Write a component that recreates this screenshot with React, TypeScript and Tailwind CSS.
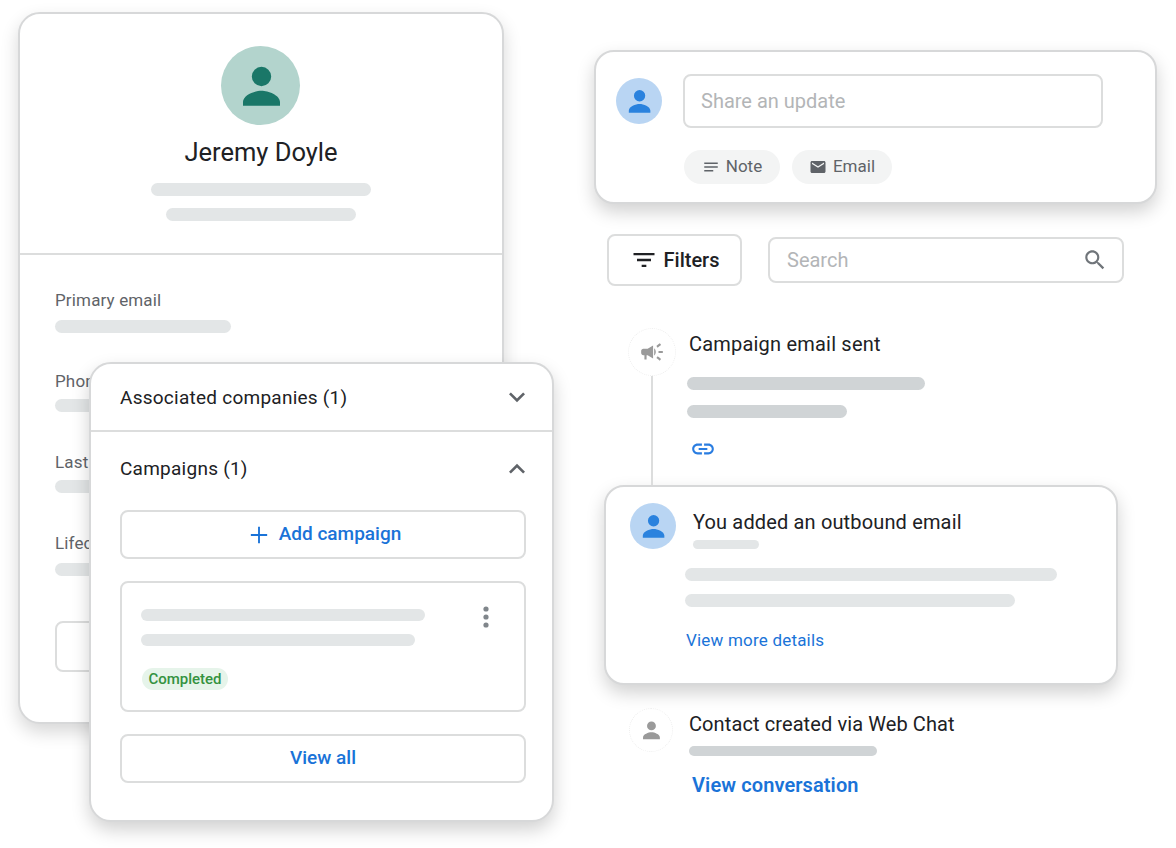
const PERSON = "M22 59.7V56c0-7 12-11.3 18.5-11.3S59 49 59 56v3.7zM40.5 40.2a9.7 9.7 0 1 0 0-19.4 9.7 9.7 0 0 0 0 19.4z";

function Avatar({ outer, fill, bg }: { outer: string; fill: string; bg: string }) {
  return (
    <div className={`${outer} ${bg} rounded-full shrink-0`}>
      <svg viewBox="0 0 79 79" className={`w-full h-full ${fill}`}>
        <path d={PERSON} />
      </svg>
    </div>
  );
}

function Icon({ d, className }: { d: string; className: string }) {
  return (
    <svg viewBox="0 0 24 24" className={`fill-current shrink-0 ${className}`}>
      <path d={d} />
    </svg>
  );
}

function Field({ label, barClass, top }: { label: string; barClass: string; top: string }) {
  return (
    <div className={top}>
      <p className="text-[17px] leading-[20px] tracking-[0.15px] text-[#5f6368]">{label}</p>
      <div className={`h-[13px] w-[176px] rounded-full bg-[#e3e6e7] ${barClass}`} />
    </div>
  );
}

function ProfileCard() {
  return (
    <div className="w-[486px] h-[712px] rounded-[22px] border-2 border-[#d7d8d9] bg-white shadow-[0_8px_18px_rgba(0,0,0,0.16)]">
      <div className="flex flex-col items-center pt-[32px] pb-[32px] border-b-2 border-[#dcdddd]">
        <Avatar outer="mr-[2px] w-[79px] h-[79px]" bg="bg-[#b3d4cd]" fill="fill-[#1a7768]" />
        <h1 className="mt-[12px] text-[25.5px] leading-[30px] text-[#202124]">Jeremy Doyle</h1>
        <div className="mt-[16px] h-[13px] w-[220px] rounded-full bg-[#e3e6e7]" />
        <div className="mt-[12px] h-[13px] w-[190px] rounded-full bg-[#e3e6e7]" />
      </div>
      <div className="px-[35px] pt-[35px]">
        <Field label="Primary email" top="" barClass="mt-[10px]" />
        <Field label="Phone number" top="mt-[38px]" barClass="mt-[8px]" />
        <Field label="Last contacted" top="mt-[40px]" barClass="mt-[8px]" />
        <Field label="Lifecycle stage" top="mt-[40px]" barClass="mt-[10px]" />
        <div className="mt-[45px] h-[51px] w-[300px] rounded-[8px] border-2 border-[#dcdddd]" />
      </div>
    </div>
  );
}

function CampaignsCard() {
  return (
    <div className="absolute left-[89px] top-[362px] w-[465px] h-[460px] rounded-[22px] border-2 border-[#d7d8d9] bg-white shadow-[0_8px_18px_rgba(0,0,0,0.18)]">
      <div className="flex h-[66px] items-center justify-between pl-[29px] pr-[19px] border-b-2 border-[#dcdddd] box-content">
        <span className="translate-y-[1px] text-[19px] tracking-[0.25px] text-[#202124]">Associated companies (1)</span>
        <Icon className="w-[32px] h-[32px] text-[#5f6368]" d="M7.41 8.59L12 13.17l4.59-4.58L18 10l-6 6-6-6z" />
      </div>
      <div className="px-[29px]">
        <div className="flex h-[78px] items-center justify-between pb-[4px]">
          <span className="text-[19px] tracking-[0.25px] text-[#202124]">Campaigns (1)</span>
          <Icon className="w-[32px] h-[32px] text-[#5f6368] -mr-[10px]" d="M7.41 15.41L12 10.83l4.59 4.58L18 14l-6-6-6 6z" />
        </div>
        <div className="flex h-[49px] w-[406px] items-center justify-center gap-[6px] rounded-[8px] border-2 border-[#dcdddd] text-[#1a73d8]">
          <Icon className="w-[28px] h-[28px]" d="M19 12.8h-6.2V19h-1.6v-6.2H5v-1.6h6.2V5h1.6v6.2H19z" />
          <span className="text-[19px] font-medium">Add campaign</span>
        </div>
        <div className="relative mt-[22px] h-[131px] w-[406px] rounded-[8px] border-2 border-[#dcdddd] pl-[19px] pt-[26px]">
          <div className="h-[12px] w-[284px] rounded-full bg-[#e3e6e7]" />
          <div className="mt-[13px] h-[12px] w-[274px] rounded-full bg-[#e3e6e7]" />
          <div className="mt-[22px] ml-[1px] flex h-[22px] w-[86px] items-center justify-center rounded-full bg-[#e6f4ea] text-[15px] font-medium text-[#34923f]">
            Completed
          </div>
          <svg viewBox="0 0 6 22" className="absolute right-[35px] top-[23px] w-[6px] h-[22px] fill-[#80868b]">
            <circle cx="3" cy="3" r="2.6" />
            <circle cx="3" cy="11" r="2.6" />
            <circle cx="3" cy="19" r="2.6" />
          </svg>
        </div>
        <div className="mt-[22px] flex h-[49px] w-[406px] items-center justify-center rounded-[8px] border-2 border-[#dcdddd] text-[19px] font-medium text-[#1a73d8]">
          View all
        </div>
      </div>
    </div>
  );
}

function UpdateCard() {
  return (
    <div className="w-[563px] h-[154px] rounded-[20px] border-2 border-[#d7d8d9] bg-white shadow-[0_8px_18px_rgba(0,0,0,0.18)] pl-[20px] pt-[22px]">
      <div className="flex">
        <Avatar outer="mt-[4px] w-[46px] h-[46px]" bg="bg-[#b9d5f3]" fill="fill-[#2a82de]" />
        <div className="ml-[21px] flex h-[54px] w-[420px] items-center rounded-[8px] border-2 border-[#dcdddd] pl-[16px] text-[20px] text-[#b3b5b7]">
          Share an update
        </div>
      </div>
      <div className="ml-[68px] mt-[22px] flex gap-[12px]">
        <div className="flex h-[34px] w-[96px] items-center justify-center gap-[6px] rounded-full bg-[#f3f4f4] text-[17px] text-[#5f6368]">
          <Icon className="w-[18px] h-[18px]" d="M3 18h12v-2H3v2zM3 6v2h18V6H3zm0 7h18v-2H3v2z" />
          Note
        </div>
        <div className="flex h-[34px] w-[100px] items-center justify-center gap-[6px] rounded-full bg-[#f3f4f4] text-[17px] text-[#5f6368]">
          <Icon className="w-[18px] h-[18px]" d="M20 4H4c-1.1 0-1.99.9-1.99 2L2 18c0 1.1.9 2 2 2h16c1.1 0 2-.9 2-2V6c0-1.1-.9-2-2-2zm0 4l-8 5-8-5V6l8 5 8-5v2z" />
          Email
        </div>
      </div>
    </div>
  );
}

function Toolbar() {
  return (
    <div className="mt-[30px] ml-[13px] flex items-center">
      <div className="flex h-[52px] w-[135px] items-center justify-center gap-[6px] rounded-[8px] border-2 border-[#dcdddd] text-[20px] font-medium text-[#202124]">
        <Icon className="w-[28px] h-[28px]" d="M10 18h4v-2h-4v2zM3 6v2h18V6H3zm3 7h12v-2H6v2z" />
        Filters
      </div>
      <div className="ml-[26px] flex h-[46px] w-[356px] items-center justify-between rounded-[8px] border-2 border-[#dcdddd] pl-[17px] pr-[14px] text-[20px] text-[#b3b5b7]">
        Search
        <Icon className="w-[26px] h-[26px] text-[#70757a]" d="M15.5 14h-.79l-.28-.27C15.41 12.59 16 11.11 16 9.5 16 5.91 13.09 3 9.5 3S3 5.91 3 9.5 5.91 16 9.5 16c1.61 0 3.09-.59 4.23-1.57l.27.28v.79l5 4.99L20.49 19l-4.99-5zm-6 0C7.01 14 5 11.99 5 9.5S7.01 5 9.5 5 14 7.01 14 9.5 11.99 14 9.5 14z" />
      </div>
    </div>
  );
}

function TimelineTop() {
  return (
    <div className="relative ml-[34px] mt-[42px] flex h-[157px] pl-[61px] pt-[4px]">
      <div className="absolute left-[0px] top-0 flex h-[48px] w-[48px] items-center justify-center rounded-full border border-dotted border-[#eeeeee] text-[#9a9a9a]">
        <Icon className="w-[26px] h-[26px]" d="M18 11v2h4v-2h-4zm-2 6.61c.96.71 2.21 1.65 3.2 2.39.4-.53.8-1.07 1.2-1.6-.99-.74-2.24-1.68-3.2-2.4-.4.54-.8 1.08-1.2 1.61zM20.4 5.6c-.4-.53-.8-1.07-1.2-1.6-.99.74-2.24 1.68-3.2 2.4.4.53.8 1.07 1.2 1.6.96-.72 2.21-1.65 3.2-2.4zM4 9c-1.1 0-2 .9-2 2v2c0 1.1.9 2 2 2h1v4h2v-4h1l5 3V6L8 9H4zm11.5 3c0-1.33-.58-2.53-1.5-3.35v6.69c.92-.81 1.5-2.01 1.5-3.34z" />
      </div>
      <div className="absolute left-[23px] top-[48px] h-[109px] w-[2px] bg-[#dcdddd]" />
      <div>
        <p className="text-[20px] leading-[24px] tracking-[0.2px] text-[#202124]">Campaign email sent</p>
        <div className="-ml-[2px] mt-[21px] h-[13px] w-[238px] rounded-full bg-[#d0d4d6]" />
        <div className="-ml-[2px] mt-[15px] h-[13px] w-[160px] rounded-full bg-[#d0d4d6]" />
        <Icon className="mt-[18px] ml-[1px] w-[26px] h-[26px] text-[#2a7de1]" d="M3.9 12c0-1.71 1.39-3.1 3.1-3.1h4V7H7c-2.76 0-5 2.24-5 5s2.24 5 5 5h4v-1.9H7c-1.71 0-3.1-1.39-3.1-3.1zM8 13h8v-2H8v2zm9-6h-4v1.9h4c1.71 0 3.1 1.39 3.1 3.1s-1.39 3.1-3.1 3.1h-4V17h4c2.76 0 5-2.24 5-5s-2.24-5-5-5z" />
      </div>
    </div>
  );
}

function OutboundCard() {
  return (
    <div className="ml-[10px] h-[200px] w-[514px] rounded-[20px] border-2 border-[#d7d8d9] bg-white shadow-[0_8px_18px_rgba(0,0,0,0.18)] pl-[24px] pt-[16px]">
      <div className="flex">
        <Avatar outer="w-[46px] h-[46px]" bg="bg-[#b9d5f3]" fill="fill-[#2a82de]" />
        <div className="ml-[17px] pt-[7px]">
          <p className="text-[20px] leading-[24px] tracking-[0.15px] text-[#202124]">You added an outbound email</p>
          <div className="mt-[6px] h-[9px] w-[66px] rounded-full bg-[#e3e6e7]" />
        </div>
      </div>
      <div className="ml-[55px] mt-[19px] h-[13px] w-[372px] rounded-full bg-[#e3e6e7]" />
      <div className="ml-[55px] mt-[13px] h-[13px] w-[330px] rounded-full bg-[#e3e6e7]" />
      <p className="ml-[56px] mt-[22px] text-[17px] leading-[22px] tracking-[0.2px] text-[#1a73d8]">View more details</p>
    </div>
  );
}

function ContactRow() {
  return (
    <div className="relative ml-[35px] mt-[27px] pl-[60px]">
      <div className="absolute left-0 top-[-4px] flex h-[44px] w-[44px] items-center justify-center rounded-full border border-dotted border-[#eeeeee]">
        <svg viewBox="0 0 79 79" className="w-[36px] h-[36px] fill-[#9a9a9a]">
          <path d={PERSON} />
        </svg>
      </div>
      <p className="text-[20px] leading-[24px] tracking-[0.1px] text-[#202124]">Contact created via Web Chat</p>
      <div className="mt-[10px] h-[10px] w-[188px] rounded-full bg-[#d0d4d6]" />
      <p className="ml-[3px] mt-[16px] text-[20px] leading-[26px] font-semibold tracking-[0.1px] text-[#1a73d8]">View conversation</p>
    </div>
  );
}

export default function App() {
  return (
    <div className="relative h-[848px] w-[1176px] overflow-hidden bg-white font-['Roboto',sans-serif]">
      <div className="flex pt-[12px] pl-[18px]">
        <ProfileCard />
        <div className="ml-[90px] pt-[38px]">
          <UpdateCard />
          <Toolbar />
          <TimelineTop />
          <OutboundCard />
          <ContactRow />
        </div>
      </div>
      <CampaignsCard />
    </div>
  );
}
